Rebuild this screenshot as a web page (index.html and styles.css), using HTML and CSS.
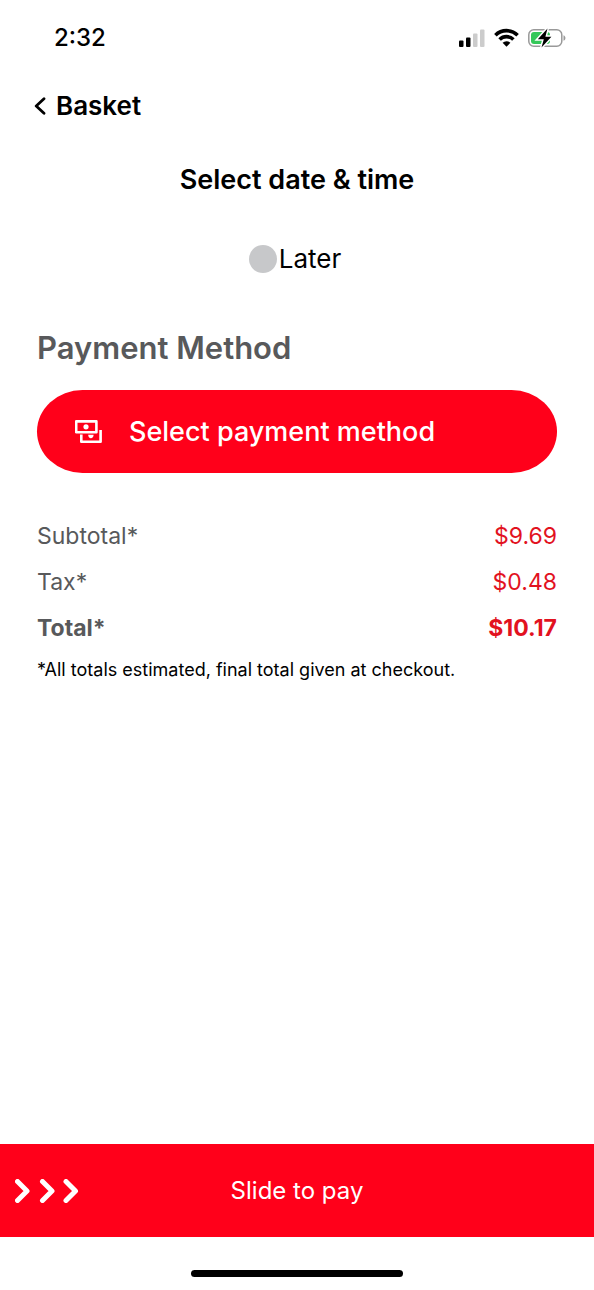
FILE: index.html
```html
<!DOCTYPE html>
<html lang="en">
<head>
<meta charset="utf-8">
<meta name="viewport" content="width=device-width, initial-scale=1">
<title>Checkout</title>
<link rel="stylesheet" href="styles.css">
</head>
<body class="screen">
  <div class="status">
    <span class="status-time">2:32</span>
    <span class="status-icons">
      <svg width="26" height="20" viewBox="0 0 26 20" aria-hidden="true">
        <rect x="0" y="12.500" width="4.500" height="6.500" rx="1"/>
        <rect x="7" y="9.500" width="4.500" height="9.500" rx="1"/>
        <rect x="14" y="5.500" width="4.500" height="13.500" rx="1" fill="#ccc"/>
        <rect x="21" y="1.500" width="4.500" height="17.500" rx="1" fill="#ccc"/>
      </svg>
      <svg width="25" height="20" viewBox="0 0 25 20" aria-hidden="true">
        <g fill="none" stroke="#000" stroke-width="3.600">
          <path d="M1.400 7.200a15.800 15.800 0 0 1 22.200 0"/>
          <path d="M5.600 11.500a9.800 9.800 0 0 1 13.800 0"/>
        </g>
        <path d="M12.500 18.800l-3.900-4a5.600 5.600 0 0 1 7.800 0z"/>
      </svg>
      <svg width="38" height="22" viewBox="0 0 38 22" aria-hidden="true">
        <rect x=".8" y="2.800" width="33" height="16.400" rx="5" fill="#fff" stroke="#999" stroke-width="1.500"/>
        <path d="M35.500 8.200v5.600c2.600-1 2.600-4.600 0-5.600z" fill="#999"/>
        <rect x="3" y="5" width="19" height="12" rx="3" fill="#34c759"/>
        <path d="M19.500 1.500L9.800 12.300h6L13.500 20.500l9.900-10.800h-6z" fill="#000" stroke="#fff" stroke-width="3" paint-order="stroke"/>
      </svg>
    </span>
  </div>

  <nav class="nav">
    <a class="back" href="#">
      <svg width="12" height="18" viewBox="0 0 12 18" aria-hidden="true">
        <path d="M10 1.800L2.200 9l7.800 7.200" fill="none" stroke="#000" stroke-width="2.800" stroke-linecap="round" stroke-linejoin="round"/>
      </svg>
      Basket
    </a>
  </nav>

  <main class="content">
    <h1 class="title">Select date &amp; time</h1>
    <label class="when"><input class="when-radio" type="radio" name="when" value="later">Later</label>

    <h2 class="heading">Payment Method</h2>
    <button class="pay-method" type="button">
      <svg width="28" height="24" viewBox="0 0 28 24" aria-hidden="true">
        <g fill="none" stroke="#fff" stroke-width="2.600" stroke-linejoin="round">
          <rect x="1.200" y="1.400" width="20.200" height="10.800"/>
          <path d="M6.300 14.600v7.200h19.300V10"/>
        </g>
        <circle cx="11" cy="6.800" r="2.600" fill="#fff"/>
        <path d="M13.200 14.800h5.400c0 2-1.200 3.400-2.700 3.400s-2.700-1.400-2.700-3.400z" fill="#fff"/>
      </svg>
      Select payment method
    </button>

    <table class="totals">
      <tr><th scope="row">Subtotal*</th><td>$9.69</td></tr>
      <tr><th scope="row">Tax*</th><td>$0.48</td></tr>
      <tr class="grand"><th scope="row">Total*</th><td>$10.17</td></tr>
    </table>
    <p class="note">*All totals estimated, final total given at checkout.</p>
  </main>

  <button class="slide" type="button">
    <svg class="slide-arrows" width="64" height="24" viewBox="0 0 64 24" aria-hidden="true">
      <path d="M2.500 2.500l9.500 9.500-9.500 9.500M27.500 2.500l9.500 9.500-9.500 9.500M51 2.500l9.500 9.500-9.500 9.500" fill="none" stroke="#fff" stroke-width="5" stroke-linecap="round" stroke-linejoin="round"/>
    </svg>
    <span>Slide to pay</span>
  </button>
  <div class="home"><span class="home-bar"></span></div>
</body>
</html>
```
FILE: styles.css
```css
* {
  box-sizing: border-box;
}

.screen {
  display: flex;
  flex-direction: column;
  min-height: 100vh;
  margin: 0;
  background: #fff;
  color: #000;
  font-family: Inter, "Liberation Sans", sans-serif;
  font-size: 26px;
  line-height: 32px;
}

.status {
  display: flex;
  align-items: center;
  justify-content: space-between;
  height: 76px;
  padding: 0 28px 0 54px;
}

.status-time {
  font-size: 24px;
  font-weight: 500;
}

.status-icons {
  display: flex;
  align-items: center;
  gap: 9px;
}

.nav {
  display: flex;
  padding: 14px 34px;
}

.back {
  display: flex;
  align-items: center;
  gap: 10px;
  color: inherit;
  font-weight: 600;
  text-decoration: none;
}

.content {
  display: flex;
  flex: 1;
  flex-direction: column;
  padding: 28px 37px;
}

.title {
  margin: 0;
  font-size: 27px;
  font-weight: 600;
  text-align: center;
}

.when {
  display: flex;
  align-items: center;
  justify-content: center;
  gap: 2px;
  margin-top: 47px;
  padding-right: 4px;
}

.when-radio {
  width: 28px;
  height: 28px;
  margin: 0;
  border-radius: 50%;
  background: #c7c8ca;
  appearance: none;
}

.when-radio:checked {
  background: #ff001a;
}

.heading {
  margin: 57px 0 0;
  color: #58595b;
  font-size: 31px;
  font-weight: 600;
}

.pay-method {
  display: flex;
  align-items: center;
  gap: 26px;
  height: 83px;
  margin-top: 26px;
  padding: 0 38px;
  border: 0;
  border-radius: 46px / 42px;
  background: #ff001a;
  color: #fff;
  font: inherit;
  font-size: 27px;
  font-weight: 500;
}

.totals {
  width: 100%;
  margin-top: 40px;
  border-collapse: collapse;
  font-size: 23px;
}

.totals th,
.totals td {
  padding: 7px 0;
  font-weight: 400;
}

.totals th {
  color: #58595b;
  text-align: left;
}

.totals td {
  color: #e2121f;
  text-align: right;
}

.totals .grand th,
.totals .grand td {
  font-weight: 700;
}

.note {
  margin: 3px 0 0;
  font-size: 18px;
}

.slide {
  display: grid;
  grid-template-columns: 1fr auto 1fr;
  align-items: center;
  height: 93px;
  padding: 0 15px;
  border: 0;
  background: #ff001a;
  color: #fff;
  font: inherit;
  font-size: 24px;
}

.home {
  display: flex;
  justify-content: center;
  padding: 33px 0 13px;
}

.home-bar {
  width: 212px;
  height: 7px;
  border-radius: 4px;
  background: #000;
}
```
